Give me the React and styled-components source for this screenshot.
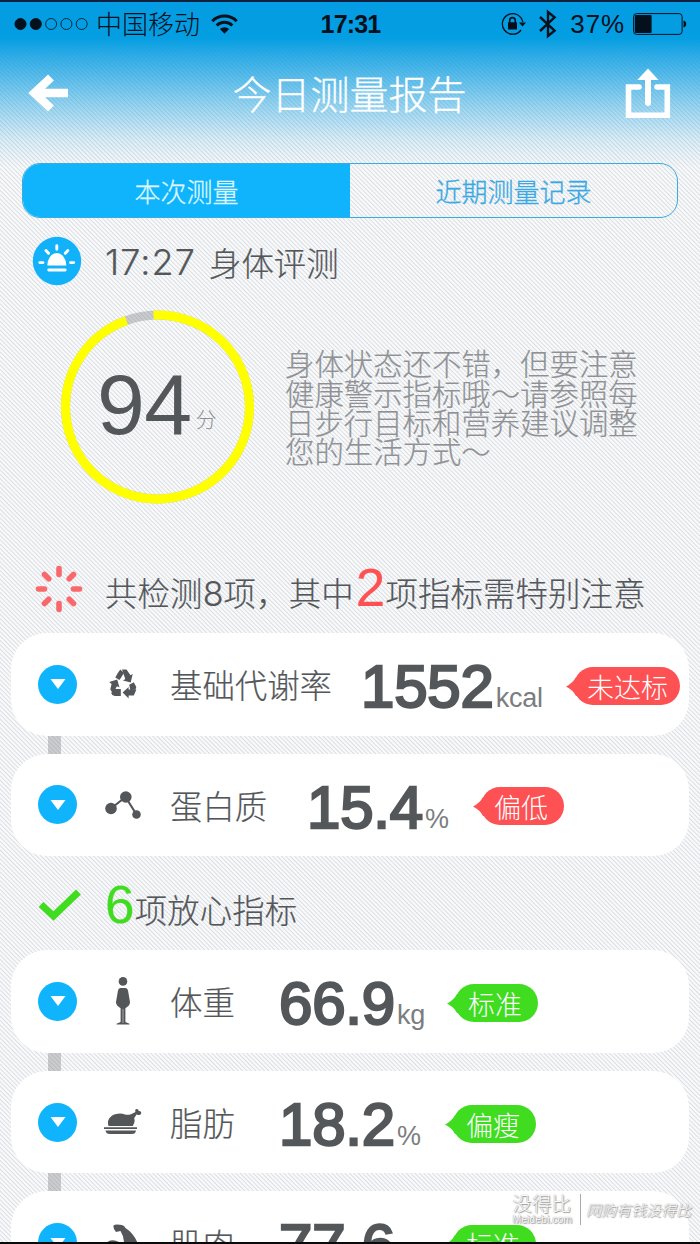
import React from 'react';
import styled, { createGlobalStyle, ThemeProvider } from 'styled-components';

const theme = {
  colors: {
    blue: '#0fb4fd',
    text: '#54575a',
    muted: '#8f9194',
    red: '#fd5153',
    green: '#40dc20',
  },
};

const GlobalStyle = createGlobalStyle`
  * {
    box-sizing: border-box;
  }

  body {
    margin: 0;
    font-family: 'Liberation Sans', 'Noto Sans CJK SC', sans-serif;
    font-weight: 300;
    color: ${({ theme }) => theme.colors.text};
  }
`;

const Page = styled.div`
  position: relative;
  display: flex;
  flex-direction: column;
  width: 700px;
  height: 1244px;
  overflow: hidden;
  border-top: 2px solid #10213f;
  border-bottom: 2px solid #0a0a0a;
  background:
    linear-gradient(
      to bottom,
      #049ce2 0,
      #049ee2 36px,
      rgba(4, 156, 226, 0.84) 52px,
      rgba(4, 156, 226, 0.62) 78px,
      rgba(4, 156, 226, 0.36) 108px,
      rgba(4, 156, 226, 0.12) 138px,
      rgba(4, 156, 226, 0) 165px
    ),
    repeating-linear-gradient(45deg, #f8fafc 0, #f6f8fa 1.3px, #dadce0 2.2px, #f8fafc 3.09px);
`;

const StatusBar = styled.div`
  display: flex;
  align-items: center;
  flex: none;
  height: 44px;
  padding: 0 13px 0 14px;
  color: #04101c;
  font-size: 26px;
`;

const StatusSide = styled.div`
  display: flex;
  align-items: center;
  flex: 1;
  justify-content: ${({ $end }) => ($end ? 'flex-end' : 'flex-start')};
`;

const Carrier = styled.span`
  margin: 2px 11px 0 7px;
  line-height: 40px;
`;

const Clock = styled.span`
  font-size: 25px;
  font-weight: 700;
  letter-spacing: -0.8px;
`;

const Percent = styled.span`
  margin: 0 8px 0 13px;
  letter-spacing: 0.9px;
`;

const NavBar = styled.div`
  display: flex;
  align-items: center;
  justify-content: space-between;
  flex: none;
  height: 94px;
  padding: 0 29px 0 28px;
`;

const Title = styled.h1`
  margin: 5px 0 0 5px;
  color: #fff;
  font-size: 39px;
  font-weight: 300;
  line-height: 60px;
  -webkit-text-stroke: 0.3px;
`;

const Segments = styled.div`
  display: flex;
  flex: none;
  height: 55px;
  margin: 23px 22px 0;
  border: 1px solid #35aede;
  border-radius: 18px;
  overflow: hidden;
`;

const Segment = styled.button`
  flex: 1;
  padding: 0;
  border: none;
  background: ${({ $active, theme }) => ($active ? theme.colors.blue : 'transparent')};
  color: ${({ $active }) => ($active ? '#dff8ff' : '#38a9e2')};
  font-family: inherit;
  font-size: 26px;
  font-weight: 300;
  -webkit-text-stroke: 0.3px;
`;

const SectionTitle = styled.div`
  display: flex;
  align-items: center;
  flex: none;
  height: 48px;
  margin-top: 19px;
  padding-left: 32px;
  font-size: 32.4px;
  -webkit-text-stroke: 0.2px;
`;

const Time = styled.span`
  width: 92px;
  margin: 2px 12px 0 23px;
  font-family: Inter, sans-serif;
  font-size: 36px;
  letter-spacing: 1.1px;
`;

const Summary = styled.div`
  display: flex;
  align-items: center;
  flex: none;
  height: 194px;
  margin-top: 25px;
  padding-left: 60px;
`;

const Ring = styled.div`
  display: grid;
  flex: none;
  width: 195px;
  height: 194px;

  > * {
    grid-area: 1 / 1;
  }
`;

const Score = styled.div`
  display: flex;
  align-items: flex-start;
  padding: 44px 0 0 37px;
  font-size: 86px;
  line-height: 100px;
  letter-spacing: -0.5px;

  small {
    margin: 51px 0 0 4px;
    font-size: 21px;
    line-height: 30px;
    color: ${({ theme }) => theme.colors.muted};
  }
`;

const Advice = styled.p`
  width: 360px;
  margin: 4px 0 0 30px;
  color: ${({ theme }) => theme.colors.muted};
  font-size: 29.4px;
  line-height: 29.4px;
  white-space: nowrap;
  -webkit-text-stroke: 0.2px;
`;

const GroupTitle = styled.div`
  display: flex;
  align-items: center;
  flex: none;
  height: 70px;
  margin: ${({ $top, $bottom }) => `${$top}px 0 ${$bottom}px`};
  padding-left: 34px;
`;

const GroupText = styled.div`
  display: flex;
  align-items: baseline;
  margin: ${({ $drop }) => $drop}px 0 0 21px;
  font-size: 32.4px;
  line-height: 50px;
  letter-spacing: 0.15px;
  white-space: nowrap;
  -webkit-text-stroke: 0.2px;
`;

const Total = styled.span`
  font-family: Inter, sans-serif;
  font-size: 34px;
`;

const Count = styled.span`
  margin-left: ${({ $gap }) => $gap}px;
  color: ${({ $tone, theme }) => theme.colors[$tone]};
  font-size: 53px;
`;

const Cards = styled.div`
  flex: none;
  padding: 0 11px;
`;

const Connector = styled.div`
  width: 13px;
  height: 18px;
  margin-left: 37px;
  background: rgba(130, 132, 135, 0.38);
`;

const Card = styled.div`
  display: flex;
  align-items: center;
  height: 102.6px;
  padding-left: 27px;
  border-radius: 36px;
  background: #fff;
`;

const Toggle = styled.div`
  display: flex;
  align-items: center;
  justify-content: center;
  flex: none;
  width: 39px;
  height: 39px;
  border-radius: 50%;
  background: ${({ theme }) => theme.colors.blue};
`;

const IconBox = styled.div`
  display: flex;
  align-items: center;
  justify-content: center;
  flex: none;
  width: 48px;
  margin: 0 23px 0 22px;
`;

const Label = styled.div`
  flex: none;
  width: ${({ $width }) => $width}px;
  margin-top: 6px;
  font-size: 32.4px;
  line-height: 50px;
  -webkit-text-stroke: 0.2px;
`;

const Value = styled.div`
  display: flex;
  align-items: baseline;
  flex: none;
  width: ${({ $width }) => $width}px;
  margin-top: 17px;
  padding-left: 1px;
  font-size: 60px;
  font-weight: 400;
  line-height: 70px;
  letter-spacing: -0.2px;
  -webkit-text-stroke: 2.4px ${({ theme }) => theme.colors.text};

  small {
    margin-left: 2px;
    font-size: 27px;
    color: #7b7d80;
    -webkit-text-stroke: 0;
  }
`;

const Badge = styled.div`
  position: relative;
  flex: none;
  height: 38px;
  min-width: 83px;
  margin: 3px 0 0 6px;
  padding: 0 12px 0 13px;
  border-radius: 19px;
  background: ${({ $tone, theme }) => theme.colors[$tone]};
  color: #fff;
  font-size: 27px;
  line-height: 44px;

  svg {
    position: absolute;
    left: -8px;
    top: 10px;
    fill: ${({ $tone, theme }) => theme.colors[$tone]};
  }
`;

const Watermark = styled.div`
  position: absolute;
  right: 9px;
  bottom: 17px;
  display: flex;
  align-items: center;
  color: #fff;
  text-shadow: 0 0 1px #777, 1px 1px 1px #999;
`;

const Brand = styled.div`
  display: flex;
  flex-direction: column;
  padding-right: 8px;
  border-right: 1px solid #aaa;
  font-size: 19.5px;
  line-height: 20px;

  small {
    font-size: 10.5px;
    line-height: 11px;
  }
`;

const Slogan = styled.div`
  margin-left: 5px;
  font-size: 15px;
  font-style: italic;
`;

const SignalIcon = () => (
  <svg width="75" height="14" viewBox="0 0 75 14" stroke="#04101c">
    {[0, 1, 2, 3, 4].map((i) => (
      <circle key={i} cx={6.5 + i * 15.3} cy="7" r={i < 2 ? 5.6 : 5.5} fill={i < 2 ? '#04101c' : 'none'} strokeWidth="0.8" />
    ))}
  </svg>
);

const WifiIcon = () => (
  <svg width="27" height="20" viewBox="0 0 27 20" fill="none" stroke="#04101c" strokeWidth="3">
    <path d="M1.3 7.2a17.2 17.2 0 0 1 24.4 0" />
    <path d="M5.7 11.5a11 11 0 0 1 15.6 0" />
    <path d="M13.5 19.7l-4.6-4.6a6.5 6.5 0 0 1 9.2 0z" fill="#04101c" stroke="none" />
  </svg>
);

const LockIcon = () => (
  <svg width="26" height="24" viewBox="0 0 26 24" fill="none" stroke="#04101c" strokeWidth="1.3">
    <path d="M21.8 10A10.3 10.3 0 1 0 20 18" />
    <path d="M18 10.5h7l-3.5 4z" fill="#04101c" stroke="none" />
    <rect x="7" y="10.3" width="9" height="7.2" fill="#04101c" stroke="none" />
    <path d="M8.7 11V8.4a2.8 2.8 0 0 1 5.6 0V11" strokeWidth="1.6" />
  </svg>
);

const BluetoothIcon = () => (
  <svg width="18" height="30" viewBox="0 0 18 30" fill="none" stroke="#04101c" strokeWidth="2.4">
    <path d="M1 8l14.6 13.6L9 27V3l6.6 5.4L1 22" />
  </svg>
);

const BatteryIcon = () => (
  <svg width="54" height="22" viewBox="0 0 54 22">
    <rect x="0.6" y="0.6" width="48.5" height="20.8" rx="3" fill="none" stroke="#04101c" />
    <rect x="1.8" y="2" width="16.8" height="18" rx="1" fill="#04101c" />
    <path d="M50.5 7.5a3.6 3.6 0 0 1 0 7z" fill="#04101c" />
  </svg>
);

const BackIcon = () => (
  <svg width="41" height="40" viewBox="0 0 41 40" fill="none" stroke="#fff" strokeWidth="8.5">
    <path d="M23 4.5L6.5 20 23 35.5M8 20h32" />
  </svg>
);

const ShareIcon = () => (
  <svg width="46" height="51" viewBox="0 0 46 51" fill="none" stroke="#fff">
    <path d="M14 19H3.5v28.3h38.8V19H32" strokeWidth="5.6" strokeLinecap="round" />
    <path d="M23 10v25" strokeWidth="6" strokeLinecap="round" />
    <path d="M12.3 12L23 0.5 33.5 12z" fill="#fff" stroke="none" />
  </svg>
);

const SunriseIcon = () => (
  <svg width="50" height="50" viewBox="0 0 50 50" stroke="#fff" strokeWidth="2.9" strokeLinecap="round">
    <circle cx="25" cy="25" r="24.2" fill="#12b2fb" stroke="none" />
    <path d="M15.3 29.5a9.5 12.5 0 0 1 19 0z" fill="#fff" stroke="none" />
    <path d="M16.7 34h16.5M24.8 9.8v3.4M14 14.5l2.5 2.8M35.8 14.5l-2.5 2.8M7.8 26.6h3.2M38.5 26.6h3.2" />
  </svg>
);

const ScoreRing = () => (
  <svg width="195" height="194" viewBox="0 0 195 194" fill="none" strokeWidth="9">
    <circle cx="97.5" cy="97" r="92" stroke="rgba(120,122,124,0.36)" />
    <circle
      cx="97.5"
      cy="97"
      r="92"
      stroke="#ff0"
      pathLength="100"
      strokeDasharray="95.2 4.8"
      transform="rotate(-92.5 97.5 97)"
    />
  </svg>
);

const SpinnerIcon = () => (
  <svg width="50" height="50" viewBox="-25 -25 50 50" stroke="#f9696c" strokeWidth="5.6" strokeLinecap="round">
    {[0, 45, 90, 135, 180, 225, 270, 315].map((deg) => (
      <path key={deg} d="M0 -20.5V-14.5" transform={`rotate(${deg})`} />
    ))}
  </svg>
);

const CheckIcon = () => (
  <svg width="50" height="36" viewBox="0 0 50 36" fill="none" stroke="#40dc20" strokeWidth="7">
    <path d="M7 17.5l12.5 11.5L44.5 5" />
  </svg>
);

const RecycleIcon = () => (
  <svg width="30" height="30" viewBox="0 0 30 30" fill="#54575a">
    <path d="M9.8 4L12.3 .6 16 4 11.5 11 7.3 8.4z" />
    <path d="M14 .5h4.5l4 5.8 2.2-1.3-2 8.6-7.8-2.1 2.4-1.4z" />
    <path d="M1.2 13l8-2.6 2.3 8.2-2.6-1.4-4 7.6-2.6-4.6 1.3-5.2z" />
    <path d="M6.4 20h6.4v7H6.7q-3-.4-3.5-3z" />
    <path d="M21.2 15.7l4.6-2.5 2.5 4.8-.8 2.7-5.2.4z" />
    <path d="M14.6 23.6l6-5.7v2.7h7.8l-2.6 6h-5.2v2.8z" />
  </svg>
);

const ProteinIcon = () => (
  <svg width="36" height="28" viewBox="0 0 36 28" fill="#54575a" stroke="#54575a">
    <path d="M6 17.5L20.5 6 31.5 23.5" fill="none" strokeWidth="2.2" />
    <circle cx="6" cy="17.5" r="5.8" stroke="none" />
    <circle cx="20.8" cy="6" r="5.8" stroke="none" />
    <circle cx="31.5" cy="23.5" r="4.3" stroke="none" />
  </svg>
);

const BodyIcon = () => (
  <svg width="16" height="48" viewBox="0 0 16 48" fill="#54575a">
    <circle cx="8" cy="4.4" r="4.3" />
    <path d="M5.8 11h4.4q2.4 0 2.900 3L15 25q.2 3.500-4.600 6.200V45l4.100 1.800v.7h-13v-.7L5.600 45V31.200Q.8 28.500 1 25l1.900-11Q3.400 11 5.800 11z" />
    <path d="M8 32v14" stroke="#fff" strokeWidth="0.5" />
  </svg>
);

const FatIcon = () => (
  <svg width="40" height="26" viewBox="0 0 40 26" fill="#54575a">
    <path d="M5.5 17C3 10 9 5 15 4.7q3.5-.5 7 .8 3 .7 6-.3l4.5-2.3Q31.5 .4 33.5 0q1.8-.1 2.4 2 2.5-.1 2.4 2-.3 2.5-3 1.9l-1.8-.3-2.3 3.6Q32.5 13 29.8 17z" />
    <path d="M1 18.2h33v1.7H1zM2.5 21.5h30.5q-.5 3.6-4 3.6H7q-4 0-4.5-3.6z" />
  </svg>
);

const MuscleIcon = () => (
  <svg width="40" height="38" viewBox="0 0 40 38" fill="#54575a">
    <path d="M10.5 1.5Q12 .2 17 .8q3.5 0 5.5 3.2Q31 9.5 35 20q4 12-8 16-14 3-24-5Q1 24 5 17.5q5-2.5 11 .5l5 3q.5-8-3.5-14l-4.5 1q-3-2.5-2.5-6.500z" />
  </svg>
);

const Metric = ({ icon, label, labelWidth, value, unit, valueWidth, status, tone }) => (
  <Card>
    <Toggle>
      <svg width="16" height="10" viewBox="0 0 16 10" fill="#fff">
        <path d="M0.5 0h15L8 10z" />
      </svg>
    </Toggle>
    <IconBox>{icon}</IconBox>
    <Label $width={labelWidth}>{label}</Label>
    <Value $width={valueWidth}>
      {value}
      <small>{unit}</small>
    </Value>
    <Badge $tone={tone}>
      <svg width="14" height="19" viewBox="0 0 14 19">
        <path d="M0 9.5Q7 6 10 0h4v19h-4Q7 13 0 9.5z" />
      </svg>
      {status}
    </Badge>
  </Card>
);

const MetricList = ({ items }) => (
  <Cards>
    {items.map((item, i) => (
      <React.Fragment key={item.label}>
        {i > 0 && <Connector />}
        <Metric {...item} />
      </React.Fragment>
    ))}
  </Cards>
);

const warnings = [
  { icon: <RecycleIcon />, label: '基础代谢率', labelWidth: 190, value: '1552', unit: 'kcal', valueWidth: 208, status: '未达标', tone: 'red' },
  { icon: <ProteinIcon />, label: '蛋白质', labelWidth: 136, value: '15.4', unit: '%', valueWidth: 169, status: '偏低', tone: 'red' },
];

const normals = [
  { icon: <BodyIcon />, label: '体重', labelWidth: 108, value: '66.9', unit: 'kg', valueWidth: 171, status: '标准', tone: 'green' },
  { icon: <FatIcon />, label: '脂肪', labelWidth: 108, value: '18.2', unit: '%', valueWidth: 169, status: '偏瘦', tone: 'green' },
  { icon: <MuscleIcon />, label: '肌肉', labelWidth: 108, value: '77.6', unit: '%', valueWidth: 169, status: '标准', tone: 'green' },
];

const App = () => {
  return (
    <ThemeProvider theme={theme}>
      <GlobalStyle />
      <Page>
        <StatusBar>
          <StatusSide>
            <SignalIcon />
            <Carrier>中国移动</Carrier>
            <WifiIcon />
          </StatusSide>
          <Clock>17:31</Clock>
          <StatusSide $end>
            <LockIcon />
            <svg width="12" height="1" />
            <BluetoothIcon />
            <Percent>37%</Percent>
            <BatteryIcon />
          </StatusSide>
        </StatusBar>
        <NavBar>
          <BackIcon />
          <Title>今日测量报告</Title>
          <ShareIcon />
        </NavBar>
        <Segments>
          <Segment $active>本次测量</Segment>
          <Segment>近期测量记录</Segment>
        </Segments>
        <SectionTitle>
          <SunriseIcon />
          <Time>17:27</Time>
          身体评测
        </SectionTitle>
        <Summary>
          <Ring>
            <ScoreRing />
            <Score>
              94<small>分</small>
            </Score>
          </Ring>
          <Advice>
            身体状态还不错，但要注意
            <br />
            健康警示指标哦～请参照每
            <br />
            日步行目标和营养建议调整
            <br />
            您的生活方式～
          </Advice>
        </Summary>
        <GroupTitle $top={50} $bottom={9}>
          <SpinnerIcon />
          <GroupText $drop={4}>
            共检测<Total>8</Total>项，其中
            <Count $tone="red" $gap={2}>
              2
            </Count>
            项指标需特别注意
          </GroupText>
        </GroupTitle>
        <MetricList items={warnings} />
        <GroupTitle $top={14} $bottom={10}>
          <CheckIcon />
          <GroupText $drop={6}>
            <Count $tone="green" $gap={0}>
              6
            </Count>
            项放心指标
          </GroupText>
        </GroupTitle>
        <MetricList items={normals} />
        <Watermark>
          <Brand>
            没得比
            <small>Meidebi.com</small>
          </Brand>
          <Slogan>网购有钱没得比</Slogan>
        </Watermark>
      </Page>
    </ThemeProvider>
  );
};

export default App;
